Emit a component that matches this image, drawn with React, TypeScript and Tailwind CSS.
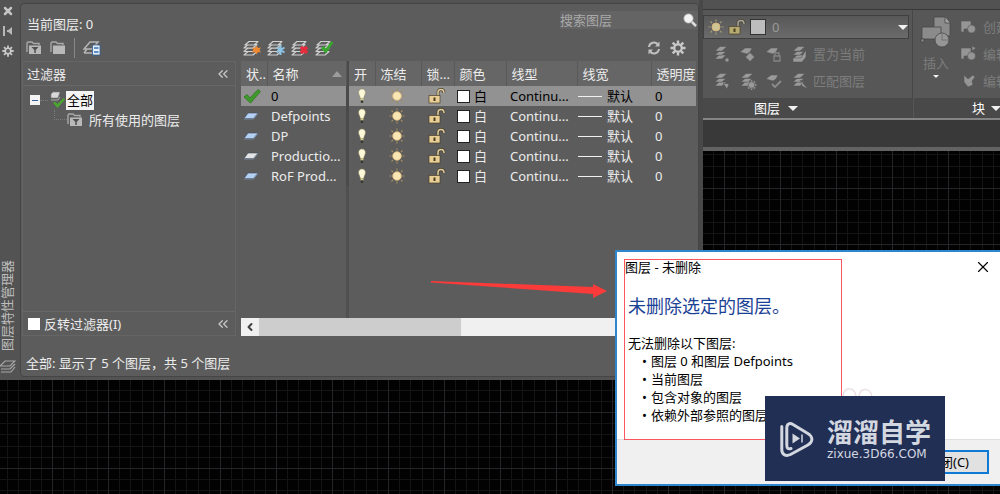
import { useState } from "react";
import { ChevronLeft, ChevronsLeft, X } from "lucide-react";

type Layer = {
  name: string;
  status: "current" | "used" | "empty";
};

const layers: Layer[] = [
  { name: "0", status: "current" },
  { name: "Defpoints", status: "used" },
  { name: "DP", status: "used" },
  { name: "Productio...", status: "empty" },
  { name: "RoF Prod...", status: "used" },
];

const undeletable = [
  "图层 0 和图层 Defpoints",
  "当前图层",
  "包含对象的图层",
  "依赖外部参照的图层",
];

const Check = ({ className = "" }: { className?: string }) => (
  <svg viewBox="0 0 18 16" className={className} aria-hidden="true">
    <path d="M1 9 L4 6.5 L7 10 L15 1.5 L17.5 3.5 L7.5 15 Z" fill="#3f9a2c" stroke="#2c7420" strokeWidth="0.8" />
  </svg>
);

const Sheet = ({ fill }: { fill: string }) => (
  <svg viewBox="0 0 16 8" className="h-2 w-4" aria-hidden="true">
    <path d="M5 1 H15 L10.5 6.5 H1 Z" fill={fill} stroke="#3d4a5a" strokeWidth="0.6" />
    <path d="M1 7 H10.5 L15 1.5" fill="none" stroke="#8fa9c8" strokeWidth="0.6" />
  </svg>
);

const Bulb = () => (
  <svg viewBox="0 0 10 16" className="h-4 w-[10px]" aria-hidden="true">
    <path d="M5 1 C7.6 1 8.6 3 8.4 5 C8.2 7 6.8 8.4 6.6 10.5 H3.4 C3.2 8.4 1.8 7 1.6 5 C1.4 3 2.4 1 5 1 Z" fill="#fdf8d8" stroke="#8a8458" strokeWidth="0.5" />
    <rect x="3.6" y="10.5" width="2.8" height="2" fill="#d9cf8f" />
    <rect x="3.8" y="12.5" width="2.4" height="2.3" fill="#34342c" />
  </svg>
);

const Sun = ({ fill = "#fae6b2", ray = "#a08c62", r = 4.3 }) => (
  <svg viewBox="0 0 16 16" className="h-4 w-4" aria-hidden="true">
    <path d="M8 0.5 V2.5 M8 13.5 V15.5 M0.5 8 H2.5 M13.5 8 H15.5 M2.5 2.5 L4 4 M12 12 L13.5 13.5 M13.5 2.5 L12 4 M4 12 L2.5 13.5" stroke={ray} strokeWidth="1.2" />
    <circle cx="8" cy="8" r={r} fill={fill} stroke="#dcb878" strokeWidth="0.8" />
  </svg>
);

const Lock = ({ fill = "#e9cf95", shackle = "#e0cda2" }) => (
  <svg viewBox="0 0 18 16" className="h-4 w-[18px]" aria-hidden="true">
    <path d="M10 8 V4.5 C10 2 11.3 1.5 13 1.5 C15.3 1.5 16 2.5 16 5" fill="none" stroke="#4b4028" strokeWidth="2.8" />
    <path d="M10 8 V4.5 C10 2 11.3 1.5 13 1.5 C15.3 1.5 16 2.5 16 5" fill="none" stroke={shackle} strokeWidth="1.5" />
    <rect x="1" y="7.5" width="11" height="7.5" fill={fill} stroke="#4b4028" strokeWidth="0.7" />
    <rect x="5.5" y="9.5" width="2" height="3.5" fill="#4b3d1f" />
  </svg>
);

const Stack = ({ children }: { children?: React.ReactNode }) => (
  <svg viewBox="0 0 20 18" className="h-[18px] w-5" aria-hidden="true">
    <g fill="#5c5c5c" stroke="#d0d0d0" strokeWidth="1.2" strokeLinejoin="round">
      <path d="M2 16 L6 12.5 H15 L11 16 Z" />
      <path d="M2 12.5 L6 9 H15 L11 12.5 Z" />
      <path d="M2 9 L6 5.5 H15 L11 9 Z" />
      <path d="M3 6 L7 2.5 H16 L12 6 Z" />
    </g>
    {children}
  </svg>
);

const Folder = ({ filter = false }) => (
  <svg viewBox="0 0 16 14" className="h-[14px] w-4" aria-hidden="true">
    <path d="M1 11 V2 L2 1 H6 L7.5 2.5 H13 V4" fill="none" stroke="#a8a8a8" strokeWidth="1.4" />
    <path d="M3 4.5 H15 V13 H3 Z" fill="#b9b9b9" />
    {filter && <path d="M5.5 6 H12.5 L9.8 9 V12 H8.3 V9 Z" fill="#505050" />}
  </svg>
);

const Gear = ({ className = "" }: { className?: string }) => (
  <svg viewBox="0 0 16 16" className={className} aria-hidden="true">
    <path d="M8 0.5 V15.5 M0.5 8 H15.5 M2.7 2.7 L13.3 13.3 M13.3 2.7 L2.7 13.3" stroke="#c8c8c8" strokeWidth="2.4" />
    <circle cx="8" cy="8" r="4.8" fill="#c8c8c8" />
    <circle cx="8" cy="8" r="2.6" fill="#5c5c5c" />
  </svg>
);

// greyed-out ribbon tools: sheets on top, a different mark below each
const DimTool = ({ kind }: { kind: number }) => (
  <svg viewBox="0 0 18 18" className="h-[18px] w-[18px]" aria-hidden="true">
    <g fill="#9a9a9a" stroke="#505050" strokeWidth="0.5">
      {[0, 3, 4, 5, 7].includes(kind) ? (
        <>
          <path d="M2 14 L6 10 H13 L9 14 Z" />
          <path d="M2 10 L6 6.5 H13 L9 10 Z" />
          <path d="M2 6 L7 1.5 H14 L9 6 Z" />
        </>
      ) : (
        <path d="M1 7 L6 3 H13 L11 7 L8 9 Z" />
      )}
      {kind === 0 && <circle cx="14" cy="15" r="2" />}
      {kind === 1 && <path d="M11 7.5 L15.5 12 L11 16.5 L6.5 12 Z" />}
      {kind === 2 && <path d="M10 11 V8 H14 V11 M9 11 H15 V16 H9 Z" fill="none" stroke="#858585" strokeWidth="1.3" />}
      {kind === 3 && <path d="M2 13 H10 L15 5 V12 L11 17 H2 Z" />}
      {kind === 4 && <path d="M10 11 L16 12 L14 17 Z" />}
      {kind === 5 && (
        <>
          <path d="M12.5 8 V18 M7.5 13 H17.5 M9 9.5 L16 16.5 M16 9.5 L9 16.5" stroke="#8c8c8c" strokeWidth="1.8" />
          <circle cx="12.5" cy="13" r="3.2" />
        </>
      )}
      {kind === 6 && <path d="M7 12 L10 15 L16 9" fill="none" stroke="#8c8c8c" strokeWidth="1.8" />}
      {kind === 7 && <path d="M9 8 L17 17 L11 14 Z" />}
    </g>
  </svg>
);

const BlockTool = ({ kind }: { kind: number }) => (
  <svg viewBox="0 0 18 18" className="h-[18px] w-[18px]" aria-hidden="true">
    {kind < 2 ? (
      <g fill="#959595" stroke="#555" strokeWidth="0.6">
        <path d="M2 3 H12 V11 H5 V14 H2 Z" />
        <circle cx="12.5" cy="11" r="4" />
        {kind === 1 && <path d="M13 1 L17 3 L13 6 Z" />}
      </g>
    ) : (
      <path d="M5 3 L9 7 L14 3 L16 5 L13 9 L14 13 L9 15 L5 10 Z" fill="#959595" stroke="#555" strokeWidth="0.6" />
    )}
  </svg>
);

const Caret = ({ small = false }) => (
  <svg viewBox="0 0 10 5" className={small ? "h-[3px] w-1.5 shrink-0" : "h-[5px] w-[10px] shrink-0"} aria-hidden="true">
    <path d="M0 0 H10 L5 5 Z" fill="#f0f0f0" />
  </svg>
);

const CanvasGrid = () => (
  <svg className="absolute inset-0 h-full w-full" aria-hidden="true">
    <defs>
      <pattern id="grid" x="52" y="20" width="56" height="56" patternUnits="userSpaceOnUse">
        <path d="M11.5 0 V56 M22.5 0 V56 M34.5 0 V56 M45.5 0 V56 M0 11.5 H56 M0 22.5 H56 M0 34.5 H56 M0 45.5 H56" stroke="#131416" />
        <path d="M0.5 0 V56 M0 0.5 H56" stroke="#232528" />
      </pattern>
    </defs>
    <rect width="100%" height="100%" fill="#020203" />
    <rect width="100%" height="100%" fill="url(#grid)" />
  </svg>
);

const FilterPane = () => (
  <div className="flex w-[214px] shrink-0 flex-col">
    <div className="flex h-[27px] items-center gap-2 pl-1">
      <button aria-label="新建特性过滤器"><Folder filter /></button>
      <button aria-label="新建组过滤器"><Folder /></button>
      <span className="h-5 w-px bg-[#888]" />
      <button aria-label="图层状态管理器">
        <svg viewBox="0 0 18 16" className="h-4 w-[18px]">
          <path d="M1 9 L7 2 H15 L9 9 Z M1 13 L4 9 M1 13 H9" fill="none" stroke="#b5b5b5" strokeWidth="1.5" />
          <rect x="9.5" y="5" width="7.5" height="10" fill="#e8eef6" stroke="#2f5f96" strokeWidth="0.8" />
          <path d="M11 8 H15.5 M11 12 H15.5" stroke="#2f6fb5" strokeWidth="1.5" />
        </svg>
      </button>
    </div>
    <div className="flex flex-1 flex-col border border-[#656565]">
      <div className="flex h-6 items-center justify-between border-b border-[#686868] pl-1 pr-1">
        <span>过滤器</span>
        <button aria-label="收拢过滤器树"><ChevronsLeft className="size-4 text-[#c4c4c4]" /></button>
      </div>
      <ul className="flex-1 pl-[7px] pt-1">
        <li>
          <div className="flex h-5 items-center">
            <span className="flex size-[10px] items-center justify-center bg-[#f2f2f2]">
              <span className="h-px w-1.5 bg-[#3b5f9c]" />
            </span>
            <span className="w-2 border-t border-dotted border-[#7a7a7a]" />
            <svg viewBox="0 0 18 18" className="h-[18px] w-[18px]" aria-hidden="true">
              <path d="M3 3 L5 1 H12 L10 7 H3 Z" fill="#d8d8d8" stroke="#777" strokeWidth="0.6" />
              <path d="M3 9 H10 L12 6" fill="none" stroke="#aaa" />
              <path d="M5 12 L7 10.5 L9.5 13 L15.5 7 L17 8.5 L9.5 17 Z" fill="#4aa52e" />
            </svg>
            <button className="bg-[#f4f4f4] px-px leading-[19px] text-black">全部</button>
          </div>
          <ul className="ml-6">
            <li className="flex h-5 items-center">
              <span className="h-[10px] w-[13px] self-start border-b border-l border-dotted border-[#7a7a7a]" />
              <Folder filter />
              <button className="ml-1.5">所有使用的图层</button>
            </li>
          </ul>
        </li>
      </ul>
      <div className="flex h-6 items-center justify-between border-t border-[#686868] pl-[5px] pr-1">
        <label className="flex items-center gap-1">
          <input type="checkbox" className="size-3 appearance-none bg-white checked:bg-sky-500" />
          反转过滤器(I)
        </label>
        <button aria-label="收拢"><ChevronsLeft className="size-4 text-[#c4c4c4]" /></button>
      </div>
    </div>
  </div>
);

const th = "border-r border-[#595959] bg-[#666] pl-[5px] text-left font-normal overflow-hidden";

const LayerTable = () => {
  const [selected, setSelected] = useState("0");

  return (
    <table className="w-full table-fixed border-collapse whitespace-nowrap">
      <colgroup>
        <col className="w-[26px]" />
        <col className="w-[79px]" />
        <col className="w-[3px]" />
        <col className="w-[26px]" />
        <col className="w-[46px]" />
        <col className="w-[33px]" />
        <col className="w-[52px]" />
        <col className="w-[71px]" />
        <col className="w-[74px]" />
        <col />
      </colgroup>
      <thead>
        <tr className="h-[25px]">
          <th className={th}>状..</th>
          <th className={th}>
            <span className="flex items-center justify-between pr-1">
              名称
              <svg viewBox="0 0 10 6" className="h-1.5 w-[10px]"><path d="M5 0 L10 6 H0 Z" fill="#9c9c9c" /></svg>
            </span>
          </th>
          <td className="bg-[#4a4a4a]" />
          <th className={th}>开</th>
          <th className={th}>冻结</th>
          <th className={th}>锁...</th>
          <th className={th}>颜色</th>
          <th className={th}>线型</th>
          <th className={th}>线宽</th>
          <th className="bg-[#666] pl-[5px] text-left font-normal">透明度</th>
        </tr>
      </thead>
      <tbody>
        {layers.map((layer) => (
          <tr
            key={layer.name}
            onClick={() => setSelected(layer.name)}
            className={`h-5 ${selected === layer.name ? "bg-[#929292] text-black" : ""}`}>
            <td className="pl-0.5">
              {layer.status === "current" ? (
                <Check className="h-4 w-[18px]" />
              ) : (
                <Sheet fill={layer.status === "used" ? "#b4d0f4" : "#e4e4e4"} />
              )}
            </td>
            <td className="overflow-hidden pl-1">{layer.name}</td>
            <td className="bg-[#4a4a4a]" />
            <td className="pl-2"><Bulb /></td>
            <td className="pl-[14px]"><Sun /></td>
            <td className="pl-[7px]"><Lock /></td>
            <td>
              <span className="flex items-center gap-1 pl-[3px]">
                <span className="size-[13px] border border-[#222] bg-white" />
                白
              </span>
            </td>
            <td className="overflow-hidden pl-1">Continu...</td>
            <td>
              <span className="flex items-center gap-[5px] pl-px">
                <span className="w-6 border-t border-[#f0f0f0]" />
                默认
              </span>
            </td>
            <td className="pl-1">0</td>
          </tr>
        ))}
      </tbody>
    </table>
  );
};

const LayerPane = () => (
  <div className="flex min-w-0 flex-1 flex-col">
    <div className="flex h-[27px] items-center justify-between pl-px pr-[10px]">
      <div className="flex gap-1">
        <button aria-label="新建图层">
          <Stack><path d="M14.5 6.5 L16 9 L19 8.5 L17.5 11 L19 13.5 L16 13 L14.5 15.5 L13 13 L10 13.5 L11.5 11 L10 8.5 L13 9 Z" fill="#ef8a32" /></Stack>
        </button>
        <button aria-label="在所有视口中都被冻结的新图层视口">
          <Stack><path d="M14.5 6 V16 M10.5 8.5 L18.5 13.5 M18.5 8.5 L10.5 13.5" stroke="#8cc4e6" strokeWidth="2" /></Stack>
        </button>
        <button aria-label="删除图层">
          <Stack><path d="M11 8 L17 14 M17 8 L11 14" stroke="#e52b3c" strokeWidth="3.5" /></Stack>
        </button>
        <button aria-label="置为当前">
          <Stack><path d="M7 9.5 L9.5 7 L12 9.5 L17 2.5 L19.5 3.5 L12 14.5 Z" fill="#36a82c" /></Stack>
        </button>
      </div>
      <div className="flex items-center gap-2">
        <button aria-label="刷新">
          <svg viewBox="0 0 16 16" className="size-4" fill="none" stroke="#c0c0c0" strokeWidth="2">
            <path d="M3 7 C3.5 2.5 9 1 12 4.5 M13 9 C12.5 13.5 7 15 4 11.5" />
            <path d="M13.5 1.5 V6.5 H9 Z M2.5 14.5 V9.5 H7 Z" fill="#c0c0c0" stroke="none" />
          </svg>
        </button>
        <button aria-label="设置"><Gear className="size-4" /></button>
      </div>
    </div>
    <LayerTable />
    <div className="flex min-h-[132px] flex-1">
      <div className="w-[105px]" />
      <div className="w-[3px] bg-[#505050]" />
    </div>
    <div className="flex h-[18px] bg-[#f0f0f0]">
      <button aria-label="向左滚动" className="flex w-[18px] items-center justify-center">
        <ChevronLeft className="size-3 text-[#404040]" strokeWidth={4} />
      </button>
      <div className="w-[202px] bg-[#cdcdcd]" />
    </div>
  </div>
);

const LayerPalette = () => (
  <section className="flex w-[70.3%] shrink-0 self-start border-r-4 border-[#484848] bg-[#535353] pb-[3px] pt-[3px]">
    <div className="flex w-5 flex-col items-start">
      <button aria-label="关闭" className="mt-0.5 pl-0.5"><X className="size-3 text-[#c6c6c6]" strokeWidth={5} /></button>
      <button aria-label="自动隐藏" className="mt-2 pl-0.5">
        <svg viewBox="0 0 12 12" className="size-3"><path d="M1 1 H3 V11 H1 Z M10 2 V10 L5 6 Z M5 5 H8 V7 H5 Z" fill="#b8b8b8" /></svg>
      </button>
      <button aria-label="特性" className="mt-2 pl-0.5"><Gear className="size-3" /></button>
      <h2 className="mt-auto w-[18px] rotate-180 pl-1 text-[#bdbdbd] leading-[14px] [text-orientation:sideways] [writing-mode:vertical-rl]">
        图层特性管理器
      </h2>
      <svg viewBox="0 0 16 16" className="mb-0.5 mt-2 size-4" fill="none" stroke="#a8a8a8" strokeWidth="1.2">
        <path d="M0 7 L5 2 H15 L10 7 Z M1 10 H10 L15 5 M1 13 H11 L15 8" />
      </svg>
    </div>
    <div className="flex min-w-0 flex-1 flex-col rounded border border-[#454545] bg-[#5c5c5c] pl-px">
      <div className="flex h-[30px] items-start justify-between pl-[5px] pt-[7px]">
        <p className="pt-1">当前图层: 0</p>
        <div className="flex w-[138px] items-center bg-[#646464]">
          <input
            aria-label="搜索图层"
            placeholder="搜索图层"
            className="h-[18px] min-w-0 flex-1 bg-transparent outline-none placeholder:text-[#a9a9a9]"
          />
          <svg viewBox="0 0 16 16" className="size-4" aria-hidden="true">
            <path d="M9.5 9.5 L14 14" stroke="#e0e0e0" strokeWidth="2.5" />
            <circle cx="6.5" cy="6.5" r="4.8" fill="#f2f2f2" stroke="#8a8a8a" strokeWidth="0.8" />
          </svg>
        </div>
      </div>
      <div className="flex gap-[5px] pr-0.5">
        <FilterPane />
        <LayerPane />
      </div>
      <p className="flex h-[40px] items-end pb-1 pl-1">全部: 显示了 5 个图层，共 5 个图层</p>
    </div>
  </section>
);

const Ribbon = () => (
  <div className="min-w-0 flex-1 self-start overflow-hidden whitespace-nowrap">
    <div className="h-[10px] border-b border-[#383838] bg-[#525252]" />
    <div className="flex border-b-2 border-[#858585] bg-[#575757]">
      <section className="w-[210px] shrink-0 border-r border-[#474747]">
        <div className="pb-1 pr-[3px] pt-[5px]">
          <div className="flex h-6 items-center gap-1 border border-[#3f3f3f] bg-linear-to-b from-[#585858] to-[#6b6b6b] pl-1">
            <Sun fill="#cfc494" ray="#a39b74" r={4} />
            <Lock fill="#b5aa72" shackle="#a8a8a0" />
            <span className="size-4 border border-[#333] bg-[#bdbdbd]" />
            <select aria-label="当前图层" className="min-w-0 flex-1 appearance-none bg-transparent pl-0.5 text-[#999] outline-none">
              <option>0</option>
            </select>
            <Caret />
          </div>
        </div>
        <div className="flex flex-col gap-[9px] pb-2 pl-[10px] pt-0.5 text-[#7d7d7d]">
          <div className="flex h-[18px] items-center gap-2">
            {[0, 1, 2].map((k) => <button key={k} aria-label="图层工具"><DimTool kind={k} /></button>)}
            <button className="flex items-center gap-1"><DimTool kind={3} />置为当前</button>
          </div>
          <div className="flex h-[18px] items-center gap-2">
            {[4, 5, 6].map((k) => <button key={k} aria-label="图层工具"><DimTool kind={k} /></button>)}
            <button className="flex items-center gap-1"><DimTool kind={7} />匹配图层</button>
          </div>
        </div>
        <button className="flex h-5 w-full items-center gap-2 bg-[#494949] pl-[51px] text-white">
          图层 <Caret />
        </button>
      </section>
      <section className="flex min-w-0 flex-1 flex-col pl-px">
        <div className="flex flex-1 gap-1.5 pl-[5px] pt-1.5 text-[#7d7d7d]">
          <button className="flex w-[34px] shrink-0 flex-col items-center self-start">
            <svg viewBox="0 0 32 32" className="size-8" aria-hidden="true">
              <g fill="#8b8b8b" stroke="#474747" strokeWidth="0.8">
                <path d="M14 1 H25 L30 7 V20 H14 Z" />
                <path d="M25 1 V7 H30" fill="#a5a5a5" />
                <path d="M2 11 H21 V23 H2 Z" />
                <circle cx="22" cy="24" r="7" fill="#969696" />
                <path d="M22 18 V24 H28" fill="none" stroke="#696969" />
                <path d="M1 23 H4 V26 H1 Z" />
              </g>
            </svg>
            <span className="mb-1 mt-[7px] leading-4">插入</span>
            <Caret small />
          </button>
          <div className="flex flex-col gap-[9px] pt-0.5">
            {["创建", "编辑", "编辑属性"].map((text, i) => (
              <button key={text} className="flex h-[18px] items-center gap-1.5">
                <BlockTool kind={i} />
                {text}
              </button>
            ))}
          </div>
        </div>
        <button className="flex h-5 items-center gap-1.5 bg-[#494949] pl-[58px] text-white">
          块 <Caret />
        </button>
      </section>
    </div>
    <div className="h-[27px] bg-[#393939]" />
    <div className="h-1 bg-[#636363]" />
  </div>
);

const DeleteDialog = () => (
  <div role="dialog" aria-labelledby="dialog-title" className="absolute right-0 top-[250px] w-[385px] border-y-2 border-l-2 border-[#2e86cf] bg-white text-black">
    <div className="flex items-center justify-between pl-2 pr-2 pt-[5px]">
      <h2 id="dialog-title" className="leading-5">图层 - 未删除</h2>
      <button aria-label="关闭"><X className="size-[18px]" strokeWidth={1.5} /></button>
    </div>
    <div className="px-[11px] pb-[15px] pt-[17px]">
      <h3 className="text-lg leading-6 text-[#1c4296]">未删除选定的图层。</h3>
      <p className="mt-4 leading-[18px]">无法删除以下图层:</p>
      <ul className="list-none pl-[14px] leading-[18px]">
        {undeletable.map((text) => (
          <li key={text} className="flex gap-1"><span>•</span>{text}</li>
        ))}
      </ul>
    </div>
    <div className="flex h-[45px] items-center justify-end border-t border-[#dfdfdf] bg-[#f0f0f0] pr-[11px]">
      <button className="h-6 w-[82px] border-2 border-[#0f7ad6] bg-[#e1e1e1]">关闭(C)</button>
    </div>
    {/* red frame round the message */}
    <div className="pointer-events-none absolute left-[7px] top-[7px] h-[181px] w-[218px] border border-[#ff5560]" />
    <svg viewBox="0 0 32 12" className="absolute left-[225px] top-[134px] h-3 w-8" fill="none" stroke="#ecdfe6" strokeWidth="1.5" aria-hidden="true">
      <path d="M1 12 C0 0 13 0 14 10 M17 10 C18 0 30 2 30 12" />
    </svg>
  </div>
);

const Watermark = () => (
  <div className="absolute right-[55px] top-[396px] flex h-[85px] w-[180px] items-center gap-[13px] bg-[#222f54] pl-[15px] text-[#d3d7e0]">
    <svg viewBox="0 0 34 36" className="h-9 w-[34px] shrink-0" fill="none" stroke="currentColor" strokeWidth="3" strokeLinecap="round" aria-hidden="true">
      <path d="M1.8 5.5 V29 C2 34 6 35.5 10.5 33.5 L27 24.5 C33.5 21 33.5 15.5 27 12 L13 3.5 C9.5 1.5 6.8 3 6.8 7 V24 C6.8 27.5 8 28.5 11 27.5" />
      <path d="M12.5 12.5 L20 17.5 L12.5 22.5 Z" fill="currentColor" stroke="none" />
      <path d="M22 14 V21" strokeWidth="1.5" />
    </svg>
    <div>
      <p className="text-[26px] font-bold leading-[30px]">溜溜自学</p>
      <p className="font-['DejaVu_Sans',sans-serif] text-[12px] leading-[14px]">zixue.3D66.COM</p>
    </div>
  </div>
);

const App = () => (
  <main className="relative min-h-screen overflow-hidden bg-black font-['Noto_Sans','Noto_Sans_CJK_SC',sans-serif] text-[13px] leading-[18px] text-[#ececec]">
    <CanvasGrid />
    <div className="relative flex">
      <LayerPalette />
      <Ribbon />
    </div>
    <svg viewBox="0 0 178 18" className="absolute left-[430px] top-[280px] h-[18px] w-[178px]" aria-hidden="true">
      <path d="M1 1 L163 7 V4 L177 11 L163 18 V14 L1 2.5 Z" fill="#fb3a3a" />
    </svg>
    <DeleteDialog />
    <Watermark />
  </main>
);

export default App;
